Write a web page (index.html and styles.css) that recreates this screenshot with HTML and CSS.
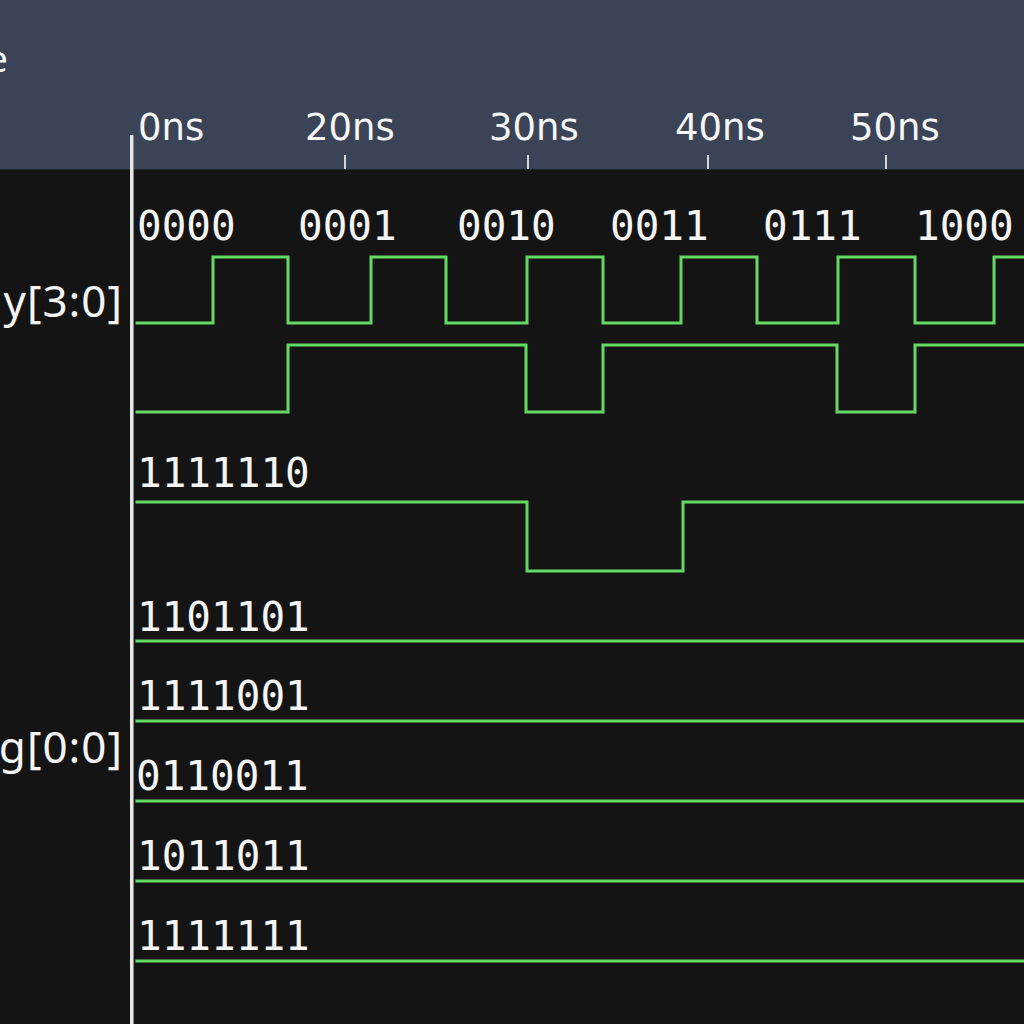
FILE: index.html
```html
<!DOCTYPE html>
<html lang="en">
<head>
<meta charset="utf-8">
<title>Waveform viewer</title>
<link rel="stylesheet" href="styles.css">
</head>
<body>
<div class="app">
  <header class="hdr">
    <div class="hdr-side"><div class="hdr-name"><span>Time</span></div></div>
    <div class="ruler">
      <span class="tlabel" style="left:7px">0ns</span>
      <span class="tlabel" style="left:174px">20ns</span>
      <span class="tlabel" style="left:358px">30ns</span>
      <span class="tlabel" style="left:544px">40ns</span>
      <span class="tlabel" style="left:719px">50ns</span>
      <span class="tick" style="left:213px"></span>
      <span class="tick" style="left:396px"></span>
      <span class="tick" style="left:576px"></span>
      <span class="tick" style="left:754px"></span>
    </div>
  </header>
  <main class="body">
    <div class="names">
      <div class="sig sig-a">y[3:0]</div>
      <div class="sig sig-b">g[0:0]</div>
    </div>
    <svg class="waves" width="893" height="854" viewBox="0 0 893 854">
      <g class="val">
        <text x="6" y="70">0000</text>
        <text x="167" y="70">0001</text>
        <text x="326" y="70">0010</text>
        <text x="479" y="70">0011</text>
        <text x="632" y="70">0111</text>
        <text x="784" y="70">1000</text>
        <text x="6" y="317">1111110</text>
        <text x="6" y="461">1101101</text>
        <text x="6" y="540">1111001</text>
        <text x="5" y="620">0110011</text>
        <text x="6" y="700">1011011</text>
        <text x="6" y="780">1111111</text>
      </g>
      <g class="trace">
        <path d="M6 153 H82 V87 H157 V153 H240 V87 H315 V153 H396 V87 H472 V153 H550 V87 H626 V153 H707 V87 H784 V153 H863 V87 H893"/>
        <path d="M6 242 H157 V175 H395 V242 H472 V175 H706 V242 H784 V175 H893"/>
        <path d="M6 332 H396 V401 H552 V332 H893"/>
        <path d="M6 471 H893"/>
        <path d="M6 551 H893"/>
        <path d="M6 631 H893"/>
        <path d="M6 711 H893"/>
        <path d="M6 791 H893"/>
      </g>
    </svg>
  </main>
  <div class="cursor"></div>
</div>
</body>
</html>
```

FILE: styles.css
```css
* { box-sizing: border-box; }
html, body {
  margin: 0;
  padding: 0;
  width: 1024px;
  height: 1024px;
  overflow: hidden;
  background: #141414;
}
.app {
  position: relative;
  width: 1024px;
  height: 1024px;
  overflow: hidden;
  display: flex;
  flex-direction: column;
  color: #f4f4f4;
}
.hdr {
  height: 170px;
  flex: none;
  display: flex;
  background: #3b4457;
  border-bottom: 1px solid #23272f;
}
.hdr-side {
  width: 131px;
  flex: none;
  display: flex;
  align-items: flex-start;
}
.hdr-name {
  width: 8px;
  margin-top: 39px;
  display: flex;
  justify-content: flex-end;
  white-space: nowrap;
  font-family: "Noto Sans", sans-serif;
  font-size: 37px;
  line-height: 37px;
  color: #f4f4f4;
}
.ruler {
  position: relative;
  flex: 1;
}
.tlabel {
  position: absolute;
  top: 109px;
  font-family: "DejaVu Sans", sans-serif;
  font-size: 37px;
  line-height: 37px;
  color: #f6f6f6;
  white-space: nowrap;
}
.tick {
  position: absolute;
  top: 155px;
  width: 2px;
  height: 14px;
  background: #d6d6d6;
}
.body {
  flex: 1;
  display: grid;
  grid-template-columns: 131px 893px;
}
.names {
  display: flex;
  flex-direction: column;
  align-items: flex-end;
  padding-right: 8px;
  padding-top: 100px;
  font-family: "Noto Sans", sans-serif;
  font-size: 44px;
  line-height: 60px;
  letter-spacing: 1px;
  color: #f4f4f4;
  white-space: nowrap;
}
.sig-b { margin-top: 386px; }
.waves { display: block; }
.val text {
  font-family: "DejaVu Sans Mono", monospace;
  font-size: 41px;
  fill: #f4f4f4;
}
.trace path {
  fill: none;
  stroke: #63d963;
  stroke-width: 3;
  stroke-linejoin: miter;
  stroke-linecap: square;
}
.cursor {
  position: absolute;
  left: 130px;
  top: 135px;
  width: 3px;
  bottom: 0;
  background: #e6e6e6;
  box-shadow: 1px 0 0 #8a8a8a;
}
```
